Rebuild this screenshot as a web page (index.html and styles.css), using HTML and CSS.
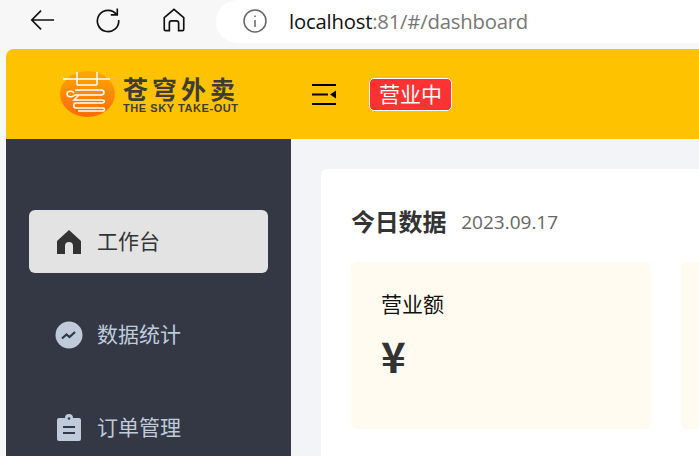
FILE: index.html
```html
<!DOCTYPE html>
<html lang="zh-CN">
  <head>
    <meta charset="utf-8" />
    <meta name="viewport" content="width=device-width, initial-scale=1.0" />
    <title>苍穹外卖</title>
    <link rel="stylesheet" href="styles.css">
  </head>
  <body>
    <div class="browser-bar">
      <div class="nav-icons">
        <svg class="nav-icon" viewBox="0 0 28 28"><path d="M27 14H3M13 4 3 14l10 10" /></svg>
        <svg class="nav-icon" viewBox="0 0 28 28"><path d="M23.500 8.500A11.500 11.500 0 1 0 25.500 14M24 1.500V8.500H17" /></svg>
        <svg class="nav-icon" viewBox="0 0 28 28"><path d="M3.500 11.500 14 2.500l10.500 9V24a1.500 1.500 0 0 1-1.500 1.500H19V17.500a2.500 2.500 0 0 0-2.500-2.500h-5A2.500 2.500 0 0 0 9 17.500v8H5A1.500 1.500 0 0 1 3.500 24Z" /></svg>
      </div>
      <div class="address-bar">
        <svg class="info-icon" viewBox="0 0 24 24">
          <circle cx="12" cy="12" r="11" />
          <path d="M12 11v7M12 6.500v1.500" />
        </svg>
        <span class="url">localhost<span class="url-rest">:81/#/dashboard</span></span>
      </div>
    </div>

    <div class="app">
      <header class="topbar">
        <div class="logo">
          <svg class="logo-mark" viewBox="0 0 55 46">
            <defs>
              <linearGradient id="logo-fill" x1="0" y1="0" x2="0" y2="1">
                <stop offset="0" stop-color="#ffa800" />
                <stop offset="1" stop-color="#ff6a00" />
              </linearGradient>
            </defs>
            <ellipse cx="27.500" cy="23" rx="27.500" ry="23" fill="url(#logo-fill)" />
            <path class="logo-lines" d="M3 8H50M17 1V14M37 1V14M17 14H37M15 19H41c4 0 4 5 0 5H15c-3 3-8 2-8-1s5-4 7-1M19 24l-5 5H42c3 0 3 3 0 3H16c-3 0-3 5 0 5H43c2 0 2 3 0 3H18" />
          </svg>
          <div class="logo-text">
            <span class="logo-cn">苍穹外卖</span>
            <span class="logo-en">THE SKY TAKE-OUT</span>
          </div>
        </div>
        <svg class="fold-icon" viewBox="0 0 24 21">
          <path d="M0 0h24v2H0zM0 9.500h16v2H0zM0 19h24v2H0zM24 6.500v8L18 10.500z" />
        </svg>
        <span class="status-badge">营业中</span>
      </header>

      <div class="app-body">
        <aside class="sidebar">
          <a class="menu-item active">
            <svg class="menu-icon" viewBox="0 0 28 26"><path d="M14 1 26 12v13h-8v-8a4 4 0 0 0-8 0v8H2V12Z" /></svg>
            <span>工作台</span>
          </a>
          <a class="menu-item">
            <svg class="menu-icon" viewBox="0 0 28 26">
              <circle cx="14" cy="13" r="13.500" />
              <path class="icon-cut" d="M7 16.500l4.500-4 3 2.500 5.500-5" />
            </svg>
            <span>数据统计</span>
          </a>
          <a class="menu-item">
            <svg class="menu-icon" viewBox="0 0 28 26">
              <path d="M4 3h6a4 4 0 0 1 8 0h6a2 2 0 0 1 2 2v19a2 2 0 0 1-2 2H4a2 2 0 0 1-2-2V5a2 2 0 0 1 2-2Z" />
              <circle class="icon-hole" cx="14" cy="3.500" r="1.300" />
              <path class="icon-cut" d="M8 12h12M8 18h12" />
            </svg>
            <span>订单管理</span>
          </a>
        </aside>

        <main class="content">
          <section class="panel">
            <div class="panel-title">
              <h2>今日数据</h2>
              <span class="panel-date">2023.09.17</span>
            </div>
            <div class="overview">
              <div class="overview-card">
                <div class="overview-label">营业额</div>
                <div class="overview-value">¥</div>
              </div>
              <div class="overview-card"></div>
            </div>
          </section>
        </main>
      </div>
    </div>
  </body>
</html>
```

FILE: styles.css
```css
* {
  box-sizing: border-box;
}
html,
body {
  margin: 0;
  height: 100%;
  overflow: hidden;
}
body {
  width: 699px;
  height: 456px;
  background-color: #f7f7f7;
  font-family: "Noto Sans CJK SC", "Open Sans", sans-serif;
  color: #333;
  display: flex;
  flex-direction: column;
}

.browser-bar {
  height: 49px;
  flex-shrink: 0;
  display: flex;
}
.nav-icons {
  width: 216px;
  padding: 7px 0 0 29px;
  display: flex;
  gap: 40px;
  align-items: flex-start;
}
.nav-icon {
  width: 26px;
  height: 26px;
  fill: none;
  stroke: #111;
  stroke-width: 1.800;
}
.address-bar {
  flex: 1;
  height: 43px;
  background: white;
  border-radius: 22px 0 0 22px;
  display: flex;
  align-items: center;
  padding: 0 0 2px 27px;
  gap: 23px;
}
.info-icon {
  width: 24px;
  height: 24px;
  fill: none;
  stroke: #666;
  stroke-width: 1.500;
}
.url {
  font-family: "Open Sans", sans-serif;
  font-size: 20.300px;
  color: #111;
  letter-spacing: -0.200px;
  margin-left: -1px;
}
.url-rest {
  color: #777;
}

.app {
  flex: 1;
  margin-left: 6px;
  border-radius: 8px 0 0 0;
  overflow: hidden;
  display: flex;
  flex-direction: column;
}
.topbar {
  height: 90px;
  flex-shrink: 0;
  background-color: #ffc200;
  display: flex;
  align-items: center;
}
.logo {
  width: 306px;
  padding-left: 54px;
  display: flex;
  align-items: center;
  gap: 8px;
}
.logo-mark {
  width: 55px;
  height: 46px;
}
.logo-lines {
  fill: none;
  stroke: white;
  stroke-width: 1.500;
}
.logo-text {
  display: flex;
  flex-direction: column;
  color: #3d3d35;
  margin-top: 2px;
}
.logo-cn {
  font-size: 25px;
  line-height: 25px;
  letter-spacing: 4px;
  font-weight: 700;
}
.logo-en {
  font-family: "Liberation Sans", sans-serif;
  font-size: 11px;
  line-height: 13px;
  margin-top: 1px;
  font-weight: 700;
  white-space: nowrap;
  letter-spacing: 0.570px;
}
.fold-icon {
  width: 24px;
  height: 21px;
  flex-shrink: 0;
}
.status-badge {
  margin-left: 33px;
  width: 83px;
  height: 33px;
  background-color: #fd3333;
  border: 1px solid #fff;
  border-radius: 5px;
  color: white;
  font-size: 21px;
  line-height: 29px;
  text-align: center;
}

.app-body {
  flex: 1;
  display: flex;
  min-height: 0;
}
.sidebar {
  width: 285px;
  flex-shrink: 0;
  background-color: #343744;
  padding: 71px 23px 0;
  display: flex;
  flex-direction: column;
  gap: 30px;
}
.menu-item {
  height: 63px;
  flex-shrink: 0;
  border-radius: 6px;
  padding: 0 0 3px 26px;
  display: flex;
  align-items: center;
  gap: 14px;
  font-size: 21px;
  color: #bfcbdb;
  fill: #bfcbdb;
}
.menu-item.active {
  background-color: #e3e3e3;
  color: #333;
  fill: #333;
}
.menu-icon {
  width: 28px;
  height: 26px;
  overflow: visible;
  margin-top: 3px;
}
.icon-cut {
  fill: none;
  stroke: #343744;
  stroke-width: 2.200;
}
.icon-hole {
  fill: #343744;
}

.content {
  flex: 1;
  background-color: #f3f4f7;
  padding: 30px 0 0 30px;
  min-width: 0;
}
.panel {
  height: 320px;
  background: white;
  border-radius: 6px 0 0 6px;
  padding: 30px 0 0 30px;
}
.panel-title {
  display: flex;
  align-items: center;
  gap: 15px;
  height: 44px;
  margin-bottom: 19px;
}
.panel-title h2 {
  margin: 0 0 2px;
  font-size: 24px;
  font-weight: 700;
  color: #333;
  letter-spacing: -0.200px;
}
.panel-date {
  font-family: "Open Sans", sans-serif;
  font-size: 19px;
  color: #666;
  margin-top: 2px;
}
.overview {
  display: flex;
  gap: 30px;
}
.overview-card {
  width: 300px;
  height: 167px;
  flex-shrink: 0;
  background-color: #fffbf0;
  border-radius: 6px;
  padding: 26px 30px;
}
.overview-label {
  font-size: 21px;
  line-height: 30px;
  color: #111;
}
.overview-value {
  font-size: 42px;
  font-weight: 700;
  line-height: 50px;
  margin-top: 12px;
  color: #333;
}
```
